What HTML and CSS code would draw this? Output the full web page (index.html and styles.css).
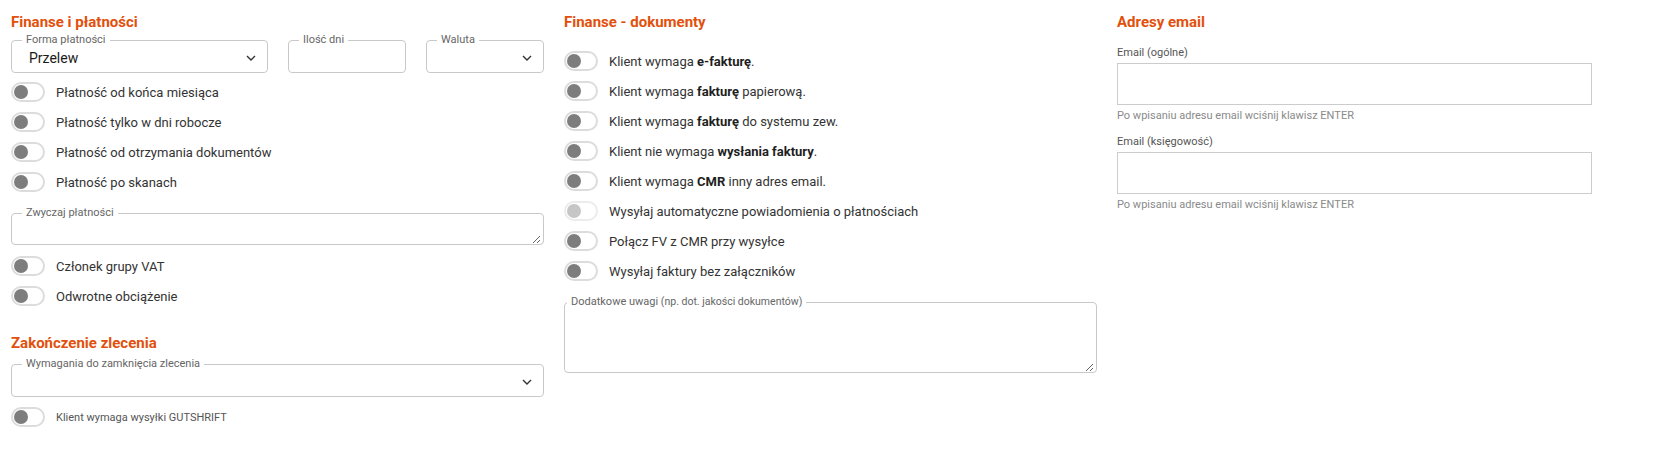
FILE: index.html
```html
<!DOCTYPE html>
<html lang="pl">
<head>
  <meta charset="UTF-8" />
  <meta name="viewport" content="width=device-width, initial-scale=1.0" />
  <title>Kontrahent – finanse</title>
  <link rel="stylesheet" href="styles.css">
</head>
<body>
  <div class="page">

    <!-- kolumna 1 -->
    <section class="col">
      <h3 class="section-title">Finanse i płatności</h3>

      <div class="pay-row">
        <fieldset class="outlined">
          <legend>Forma płatności</legend>
          <div class="field-body">
            <span class="value">Przelew</span>
            <svg class="chevron" width="10" height="6" viewBox="0 0 10 6"><path d="M1 1l4 4 4-4" /></svg>
          </div>
        </fieldset>
        <fieldset class="outlined">
          <legend>Ilość dni</legend>
          <div class="field-body"><span class="value"></span></div>
        </fieldset>
        <fieldset class="outlined">
          <legend>Waluta</legend>
          <div class="field-body">
            <span class="value"></span>
            <svg class="chevron" width="10" height="6" viewBox="0 0 10 6"><path d="M1 1l4 4 4-4" /></svg>
          </div>
        </fieldset>
      </div>

      <div class="toggles first">
        <label class="toggle"><span class="switch"></span>Płatność od końca miesiąca</label>
        <label class="toggle"><span class="switch"></span>Płatność tylko w dni robocze</label>
        <label class="toggle"><span class="switch"></span>Płatność od otrzymania dokumentów</label>
        <label class="toggle"><span class="switch"></span>Płatność po skanach</label>
      </div>

      <fieldset class="outlined area small">
        <legend>Zwyczaj płatności</legend>
        <textarea></textarea>
      </fieldset>

      <div class="toggles after-area">
        <label class="toggle"><span class="switch"></span>Członek grupy VAT</label>
        <label class="toggle"><span class="switch"></span>Odwrotne obciążenie</label>
      </div>

      <h3 class="section-title second">Zakończenie zlecenia</h3>

      <fieldset class="outlined wide">
        <legend>Wymagania do zamknięcia zlecenia</legend>
        <div class="field-body">
          <span class="value"></span>
          <svg class="chevron" width="10" height="6" viewBox="0 0 10 6"><path d="M1 1l4 4 4-4" /></svg>
        </div>
      </fieldset>

      <div class="toggles after-select">
        <label class="toggle minor"><span class="switch"></span>Klient wymaga wysyłki GUTSHRIFT</label>
      </div>
    </section>

    <!-- kolumna 2 -->
    <section class="col">
      <h3 class="section-title">Finanse - dokumenty</h3>

      <div class="toggles docs">
        <label class="toggle"><span class="switch"></span>Klient wymaga&nbsp;<b>e-fakturę</b>.</label>
        <label class="toggle"><span class="switch"></span>Klient wymaga&nbsp;<b>fakturę</b>&nbsp;papierową.</label>
        <label class="toggle"><span class="switch"></span>Klient wymaga&nbsp;<b>fakturę</b>&nbsp;do systemu zew.</label>
        <label class="toggle"><span class="switch"></span>Klient nie wymaga&nbsp;<b>wysłania faktury</b>.</label>
        <label class="toggle"><span class="switch"></span>Klient wymaga&nbsp;<b>CMR</b>&nbsp;inny adres email.</label>
        <label class="toggle disabled"><span class="switch"></span>Wysyłaj automatyczne powiadomienia o płatnościach</label>
        <label class="toggle"><span class="switch"></span>Połącz FV z CMR przy wysyłce</label>
        <label class="toggle"><span class="switch"></span>Wysyłaj faktury bez załączników</label>
      </div>

      <fieldset class="outlined area tall">
        <legend>Dodatkowe uwagi <span class="legend-note">(np. dot. jakości dokumentów)</span></legend>
        <textarea></textarea>
      </fieldset>
    </section>

    <!-- kolumna 3 -->
    <section class="col">
      <h3 class="section-title">Adresy email</h3>

      <div class="emails">
        <div class="email-group">
          <label class="email-label">Email (ogólne)</label>
          <input type="text" class="email-input" />
          <div class="email-hint">Po wpisaniu adresu email wciśnij klawisz ENTER</div>
        </div>
        <div class="email-group">
          <label class="email-label">Email (księgowość)</label>
          <input type="text" class="email-input" />
          <div class="email-hint">Po wpisaniu adresu email wciśnij klawisz ENTER</div>
        </div>
      </div>
    </section>

  </div>
</body>
</html>
```

FILE: styles.css
```css
:root {
  --title-color: #e2500c;
  --text-color: #333333;
  --muted-color: #666666;
  --border-color: #c9c9c9;
  --knob-color: #7d7d7d;
}

body {
  margin: 0;
  font-family: Roboto, 'Noto Sans', sans-serif;
  color: var(--text-color);
  background: #ffffff;
}

.page {
  display: grid;
  grid-template-columns: repeat(3, 1fr);
  column-gap: 20px;
  padding: 12px 18px 0 11px;
  align-items: start;
}

.section-title {
  margin: 0;
  font-size: 15px;
  line-height: 20px;
  font-weight: 700;
  color: var(--title-color);
}

.section-title.second {
  margin-top: 22px;
}

/* outlined fields */
.outlined {
  margin: 0;
  padding: 0 10px 5px;
  border: 1px solid var(--border-color);
  border-radius: 4px;
  min-width: 0;
}

.outlined legend {
  padding: 0 4px;
  font-size: 11px;
  line-height: 12px;
  color: var(--muted-color);
}

.field-body {
  display: flex;
  align-items: center;
  height: 18px;
  margin-top: 3px;
}

.value {
  flex: 1;
  padding-left: 7px;
  font-size: 14px;
  color: #1a1a1a;
}

.chevron {
  margin-right: 1px;
  fill: none;
  stroke: #333;
  stroke-width: 1.4;
}

.pay-row {
  display: grid;
  grid-template-columns: 257px 1fr 1fr;
  column-gap: 20px;
  margin-top: 2px;
}

.outlined.wide {
  margin-top: 5px;
}

.outlined.area {
  padding: 0 2px 0 10px;
}

.outlined.area textarea {
  display: block;
  width: 100%;
  box-sizing: border-box;
  border: none;
  outline: none;
  resize: vertical;
  background: transparent;
  font-family: inherit;
  padding: 0;
}

.outlined.small {
  margin-top: 10px;
}

.outlined.small textarea {
  height: 25px;
}

.outlined.tall {
  margin-top: 10px;
  padding-left: 2px;
}

.outlined.tall textarea {
  height: 64px;
}

.legend-note {
  font-size: 10.5px;
}

/* toggles */
.toggles.first {
  margin-top: 4px;
}

.toggles.after-area {
  margin-top: 6px;
}

.toggles.after-select {
  margin-top: 5px;
}

.toggles.docs {
  margin-top: 14px;
}

.toggle {
  display: flex;
  align-items: center;
  height: 30px;
  font-size: 13px;
  color: var(--text-color);
  cursor: pointer;
}

.toggle b {
  color: #1e1e1e;
}

.switch {
  position: relative;
  flex: 0 0 auto;
  width: 34px;
  height: 20px;
  box-sizing: border-box;
  margin-right: 11px;
  border: 2px solid #dcdcdc;
  border-radius: 10px;
  background: #ffffff;
}

.switch::after {
  content: "";
  position: absolute;
  left: 1px;
  top: 1px;
  width: 14px;
  height: 14px;
  border-radius: 50%;
  background: var(--knob-color);
}

.toggle.disabled .switch {
  border-color: #ececec;
}

.toggle.disabled .switch::after {
  background: #c6c6c6;
}

.toggle.minor {
  font-size: 11px;
  color: #555555;
}

/* emails */
.emails {
  max-width: 475px;
  margin-top: 13px;
}

.email-group + .email-group {
  margin-top: 10px;
}

.email-label {
  display: block;
  font-size: 11px;
  line-height: 16px;
  color: #555555;
  margin-bottom: 2px;
}

.email-input {
  display: block;
  width: 100%;
  height: 42px;
  box-sizing: border-box;
  border: 1px solid #cccccc;
  border-radius: 0;
  outline: none;
}

.email-hint {
  margin-top: 3px;
  font-size: 11px;
  line-height: 16px;
  color: #8a8a8a;
}
```
